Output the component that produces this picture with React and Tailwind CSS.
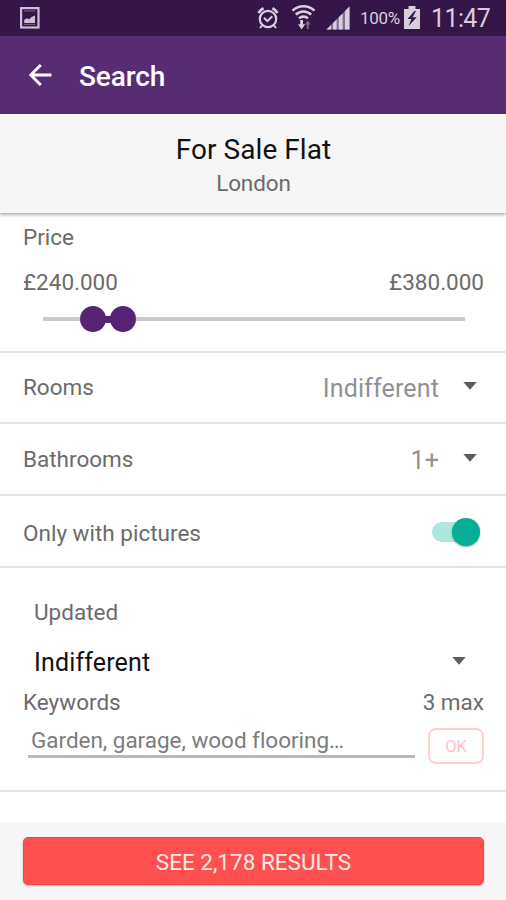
const label = "text-[22.5px] leading-[30px] text-[#6b6b6b]";

function Caret() {
  return (
    <svg width="14" height="8" viewBox="0 0 14 8" className="mb-[3px] block shrink-0">
      <path d="M0.3 0H13.7L7 7.8Z" fill="#5c5c5c" />
    </svg>
  );
}

function StatusBar() {
  return (
    <div className="flex h-9 items-center bg-[#351648] pr-[14px] pl-5 text-[#d6cfdc]">
      <svg width="20" height="22" viewBox="0 0 20 22" className="block">
        <rect x="1.1" y="1.1" width="17.4" height="19.4" fill="none" stroke="#cdc0d4" strokeWidth="2.2" />
        <path d="M4 3.9H15.4M4 17.4H15.4" stroke="#8c7a97" strokeWidth="0.8" />
        <path d="M4.2 16V12.8L7 11.2L9 12.2L12 9.8L15 8.5V16Z" fill="#cdc0d4" />
      </svg>
      <div className="ml-auto flex items-center">
        <svg width="22" height="24" viewBox="0 0 22 24" fill="none" stroke="#d6cfdc" className="mr-3 block">
          <circle cx="11" cy="13" r="8.2" strokeWidth="2.2" />
          <path d="M1.5 7A12 12 0 0 1 6.5 2.2M15.5 2.2A12 12 0 0 1 20.5 7" strokeWidth="2.8" />
          <path d="M7 11.8L10.3 15.2L15.3 10.2" strokeWidth="2" />
          <path d="M5 19.5L3 22M17 19.5L19 22" strokeWidth="2" />
        </svg>
        <svg width="25" height="26" viewBox="0 0 25 26" fill="none" stroke="#d6cfdc" className="mt-[-2px] mr-[10px] block">
          <path d="M1.5 6.6A16 16 0 0 1 23.5 6.6" strokeWidth="2.6" />
          <path d="M4.8 10.6A11 11 0 0 1 20.2 10.6" strokeWidth="2.6" />
          <path d="M8 14.4A6.5 6.5 0 0 1 17 14.4" strokeWidth="2.6" />
          <path d="M10.6 16V21" strokeWidth="2.8" />
          <path d="M7 20.2H14.2L10.6 25.4Z" fill="#d6cfdc" stroke="none" />
          <path d="M16.8 19V25" stroke="#7b6689" strokeWidth="2" />
          <path d="M13.8 20.5L16.8 16.5L19.8 20.5Z" fill="#7b6689" stroke="none" />
        </svg>
        <svg width="24" height="24" viewBox="0 0 24 24" fill="#d6cfdc" className="mr-[10px] block">
          <path d="M0.5 23.5L23.5 0.5V23.5Z" fill="#82708f" />
          <path d="M0.5 23.5L5 19V23.5ZM7 17L10.6 13.4V23.5H7ZM12.8 11.2L16.6 7.4V23.5H12.8ZM19 5L23.5 0.5V23.5H19Z" />
        </svg>
        <span className="w-[41px] text-[17px] leading-5 tracking-[-0.3px] whitespace-nowrap">100%</span>
        <svg width="16" height="23" viewBox="0 0 16 23" className="mt-[-1px] mr-[11px] ml-[3px] block">
          <path d="M0 3H4.5V0H11.5V3H16V23H0Z" fill="#d6cfdc" />
          <path d="M10.5 5L3.5 13H7.5L4.5 20L12.8 11.2H8.6L12 5Z" fill="#351648" />
        </svg>
        <span className="w-[61px] pt-[2px] text-[25px] leading-7 tracking-[-0.6px] whitespace-nowrap">11:47</span>
      </div>
    </div>
  );
}

function SelectRow({ name, value }) {
  return (
    <div className="flex h-[72px] shrink-0 items-center border-b-2 border-[#e0e2e2] pr-[29px] pl-[23px]">
      <span className={label}>{name}</span>
      <span className="mr-6 ml-auto pt-[3px] text-[25px] leading-[30px] tracking-[0.15px] text-[#8f9194]">{value}</span>
      <Caret />
    </div>
  );
}

export default function App() {
  return (
    <div className="flex h-[900px] w-[506px] flex-col overflow-hidden bg-white font-['Roboto',sans-serif] [font-variant-ligatures:none]">
      <StatusBar />
      <header className="flex h-[78px] items-center bg-[#572c73] pl-7">
        <svg width="24" height="22" viewBox="0 0 24 22" fill="none" stroke="#fff" strokeWidth="2.9" className="block">
          <path d="M23.5 11H2.8M12.8 1L2.8 11L12.8 21" />
        </svg>
        <h1 className="mt-[3px] ml-[27px] text-[28px] leading-9 font-medium tracking-[-0.1px] text-white">Search</h1>
      </header>

      <section className="z-10 flex h-[99px] shrink-0 flex-col items-center bg-[#f6f6f6] pt-[18px] pl-px shadow-[0_2px_3px_rgba(0,0,0,0.3)]">
        <h2 className="text-[28px] leading-9 tracking-[0.05px] text-[#111]">For Sale Flat</h2>
        <p className="text-[22.5px] leading-[30px] tracking-[-0.1px] text-[#6b6b6b]">London</p>
      </section>

      <section className="h-[140px] shrink-0 border-b-2 border-[#e4e6e6] pt-[9px] pr-[22px] pl-[23px]">
        <div className={label}>Price</div>
        <div className="mt-[15px] flex justify-between">
          <span className={label}>£240.000</span>
          <span className={label}>£380.000</span>
        </div>
        <div className="mx-[19px] mt-[9px] flex h-[26px] items-center">
          <div className="ml-px h-1 w-[37px] bg-[#cbcbcb]" />
          <div className="h-[26px] w-[26px] rounded-full bg-[#572475]" />
          <div className="mx-[-3px] h-[7px] w-[10px] bg-[#572475]" />
          <div className="h-[26px] w-[26px] rounded-full bg-[#572475]" />
          <div className="h-1 flex-1 bg-[#cbcbcb]" />
        </div>
      </section>

      <div className="mt-[-1px] shrink-0">
        <SelectRow name="Rooms" value="Indifferent" />
        <SelectRow name="Bathrooms" value="1+" />
      </div>

      <div className="flex h-[72px] shrink-0 items-center border-b-2 border-[#e0e2e2] pt-px pr-[26px] pl-[23px]">
        <span className="pt-[2px] text-[22.5px] leading-[30px] text-[#6b6b6b]">Only with pictures</span>
        <div className="ml-auto flex h-5 w-12 items-center justify-end rounded-full bg-[#abe8dd]">
          <div className="h-7 w-7 shrink-0 rounded-full bg-[#05ae97] shadow-[0_1px_2px_rgba(0,0,0,0.35)]" />
        </div>
      </div>

      <section className="h-[224px] shrink-0 border-b-2 border-[#e0e2e2] pt-[29px] pr-[22px] pl-[23px]">
        <div className="pl-[11px]">
          <div className={label}>Updated</div>
          <div className="mt-[21px] flex items-center justify-between pr-[18px]">
            <span className="text-[25px] leading-[30px] tracking-[0.15px] text-[#111]">Indifferent</span>
            <div className="pb-[2px]">
              <Caret />
            </div>
          </div>
        </div>
        <div className="mt-[9px] flex justify-between">
          <span className={label}>Keywords</span>
          <span className={label}>3 max</span>
        </div>
        <div className="mt-[11px] flex justify-between pl-[5px]">
          <div className="mt-[-3px] h-[33px] w-[387px] border-b-[3px] border-[#bab7c3] pl-[3px] text-[22.5px] leading-[31px] tracking-[-0.03px] text-[#7c7c7c]">
            Garden, garage, wood flooring…
          </div>
          <div className="flex h-9 w-14 items-center justify-center rounded-lg border-2 border-[#ffd0d0] pt-[2px] text-[16.5px] leading-5 text-[#ffc2c4]">
            OK
          </div>
        </div>
      </section>

      <footer className="mt-auto h-[78px] shrink-0 bg-[#f6f6f6] pt-[15px] pr-[22px] pl-[23px]">
        <button className="flex h-12 w-full items-center justify-center rounded-[5px] border border-[#f5444b] bg-[#ff5050] pt-px text-[22.5px] leading-[30px] text-[#ffe9e6] shadow-[0_1px_2px_rgba(0,0,0,0.25)]">
          SEE 2,178 RESULTS
        </button>
      </footer>
    </div>
  );
}
